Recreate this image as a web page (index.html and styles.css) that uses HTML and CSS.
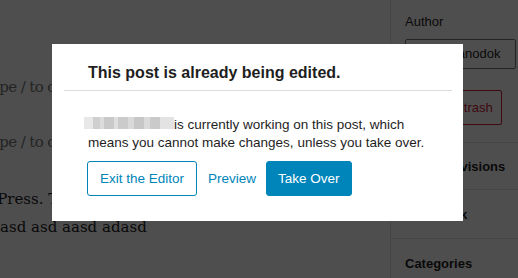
FILE: index.html
```html
<!DOCTYPE html>
<html lang="en">
<head>
<meta charset="utf-8">
<title>Post locked</title>
<link rel="stylesheet" href="styles.css">
</head>
<body>
<div class="editor">
  <main class="canvas">
    <p class="placeholder">Type / to choose a block</p>
    <p class="placeholder">Type / to choose a block</p>
    <p class="shift">WordPress. This is your first post.<br>asd asd aasd adasd</p>
    <p class="last">it lad add ld block dd</p>
  </main>
  <aside class="sidebar">
    <section class="panel panel-status">
      <div class="field-label">Author</div>
      <div class="select">amandanodok</div>
      <button class="trash" type="button">Move to trash</button>
    </section>
    <section class="panel panel-head panel-revisions">
      <svg class="rev-icon" width="24" height="24" viewBox="0 0 24 24" aria-hidden="true"><path d="M13 4.5a7.5 7.5 0 1 1-7.2 9.6l1.5-.4A6 6 0 1 0 7.3 9H10v1.5H5v-5h1.5v2.4A7.5 7.5 0 0 1 13 4.5zm-.8 3.5h1.5v4.2l2.9 1.7-.8 1.3-3.6-2.1z" fill="currentColor"/></svg>
      <span>9 Revisions</span>
    </section>
    <section class="panel panel-head panel-tall"><span>Permalink</span></section>
    <section class="panel panel-head panel-tall"><span>Categories</span></section>
  </aside>
</div>
<div class="overlay">
  <div class="modal" role="dialog" aria-labelledby="lock-title">
    <div class="modal-header">
      <h1 id="lock-title">This post is already being edited.</h1>
    </div>
    <div class="modal-body">
      <p class="message"><span class="blur" aria-hidden="true"></span>is currently working on this post, which means you cannot make changes, unless you take over.</p>
      <div class="actions">
        <button class="btn btn-secondary" type="button">Exit the Editor</button>
        <button class="btn btn-tertiary" type="button">Preview</button>
        <button class="btn btn-primary" type="button">Take Over</button>
      </div>
    </div>
  </div>
</div>
</body>
</html>
```

FILE: styles.css
```css
html, body {
  margin: 0;
  width: 518px;
  height: 278px;
  overflow: hidden;
  background: #fff;
  font-family: "Liberation Sans", Arial, sans-serif;
  color: #1e1e1e;
}

.editor {
  display: flex;
  height: 278px;
}

.canvas {
  width: 390px;
  flex-shrink: 0;
  padding-top: 73px;
  box-sizing: border-box;
  font-family: "DejaVu Serif", serif;
  font-size: 15px;
  line-height: 28px;
  color: #1e1e1e;
  white-space: nowrap;
}

.canvas p {
  margin: 0 0 27px;
}

.canvas .placeholder {
  color: #757575;
  text-indent: -18px;
  letter-spacing: -0.6px;
}

.canvas .shift {
  text-indent: -43px;
  margin-top: 29px;
}

.canvas .last {
  margin-top: 30px;
  padding-left: 16px;
}

.sidebar {
  width: 280px;
  flex-shrink: 0;
  border-left: 1px solid #e0e0e0;
  font-size: 13px;
}

.panel {
  border-bottom: 1px solid #e0e0e0;
  padding: 0 16px 0 14px;
}

.panel-status {
  padding-top: 14px;
  padding-bottom: 17px;
}

.field-label {
  line-height: 16px;
  margin-bottom: 9px;
}

.select {
  width: 111px;
  height: 30px;
  box-sizing: border-box;
  border: 1px solid #757575;
  border-radius: 2px;
  padding: 0 8px 0 12px;
  line-height: 28px;
  margin-bottom: 21px;
}

.trash {
  display: inline-flex;
  align-items: center;
  height: 35px;
  padding: 0 8px;
  border: 1px solid #d11a3a;
  border-radius: 2px;
  background: #fff;
  color: #d11a3a;
  font: 13px "Liberation Sans", Arial, sans-serif;
}

.panel-head {
  display: flex;
  align-items: center;
  height: 46px;
  font-weight: 700;
  color: #1e1e1e;
}

.panel-tall {
  height: 48px;
}

.rev-icon {
  margin-right: 4px;
}

.overlay {
  position: fixed;
  inset: 0;
  background: rgba(0, 0, 0, 0.695);
  padding: 44px 0 0 52px;
}

.modal {
  width: 411px;
  box-sizing: border-box;
  background: #fff;
  padding: 0 11px 25px 12px;
}

.modal-header {
  padding: 19px 24px 7px;
  border-bottom: 1px solid #dcdcde;
}

.modal-header h1 {
  margin: 0;
  font-size: 16px;
  line-height: 20px;
  font-weight: 700;
  color: #1e1e1e;
}

.modal-body {
  padding: 25px 12px 0 24px;
}

.message {
  margin: 0;
  font-size: 13.5px;
  line-height: 18px;
  color: #1e1e1e;
}

.blur {
  display: inline-block;
  width: 90px;
  height: 12px;
  margin-left: -4px;
  background: linear-gradient(to right,
    #e8e8e8 0 9px, #cfcfcf 9px 16px, #dcdcdc 16px 20px, #c9c9c9 20px 30px,
    #dedede 30px 34px, #cbcbcb 34px 44px, #d9d9d9 44px 50px, #c7c7c7 50px 60px,
    #dadada 60px 66px, #cacaca 66px 76px, #e3e3e3 76px 90px);
}

.actions {
  display: flex;
  gap: 4px;
  margin-top: 9px;
  margin-left: -1px;
}

.btn {
  display: inline-flex;
  align-items: center;
  height: 35px;
  box-sizing: border-box;
  padding: 0 12px;
  border: 1px solid transparent;
  border-radius: 3px;
  background: none;
  font: 13.5px "Liberation Sans", Arial, sans-serif;
  cursor: pointer;
}

.btn-secondary {
  border-color: #0085ba;
  color: #0085ba;
}

.btn-tertiary {
  padding: 0 5px 0 6px;
  color: #0085ba;
}

.btn-primary {
  padding: 0 11px;
  background: #0085ba;
  border-color: #0085ba;
  color: #fff;
}
```
